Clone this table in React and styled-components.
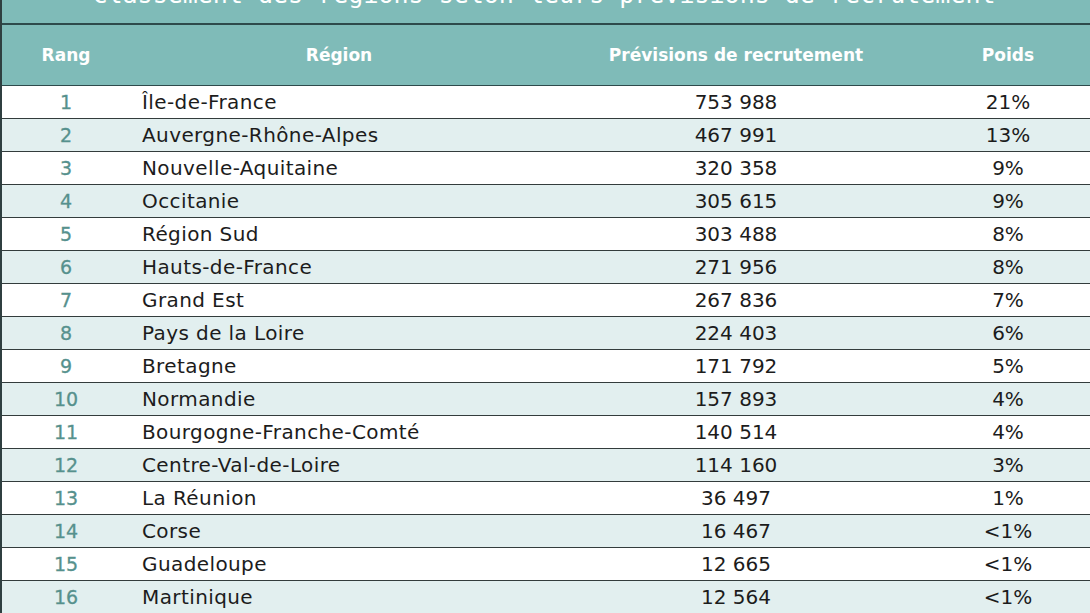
import React from "react"
import styled, { createGlobalStyle } from "styled-components"

const rows = [
  ["1", "Île-de-France", "753 988", "21%"],
  ["2", "Auvergne-Rhône-Alpes", "467 991", "13%"],
  ["3", "Nouvelle-Aquitaine", "320 358", "9%"],
  ["4", "Occitanie", "305 615", "9%"],
  ["5", "Région Sud", "303 488", "8%"],
  ["6", "Hauts-de-France", "271 956", "8%"],
  ["7", "Grand Est", "267 836", "7%"],
  ["8", "Pays de la Loire", "224 403", "6%"],
  ["9", "Bretagne", "171 792", "5%"],
  ["10", "Normandie", "157 893", "4%"],
  ["11", "Bourgogne-Franche-Comté", "140 514", "4%"],
  ["12", "Centre-Val-de-Loire", "114 160", "3%"],
  ["13", "La Réunion", "36 497", "1%"],
  ["14", "Corse", "16 467", "<1%"],
  ["15", "Guadeloupe", "12 665", "<1%"],
  ["16", "Martinique", "12 564", "<1%"],
]

const cols = "128px 418px 376px 168px"

const App = () => {
  return (
    <>
      <GlobalStyle />
      <StyledPage>
        <TitleBar>
          <span>Classement des régions selon leurs prévisions de recrutement</span>
        </TitleBar>
        <HeaderRow>
          <div>Rang</div>
          <div>Région</div>
          <div>Prévisions de recrutement</div>
          <div>Poids</div>
        </HeaderRow>
        {rows.map((r, i) => (
          <Row key={r[0]} striped={i % 2 === 1 ? 1 : 0}>
            <Rank>{r[0]}</Rank>
            <Name>{r[1]}</Name>
            <Value>{r[2]}</Value>
            <Value>{r[3]}</Value>
          </Row>
        ))}
      </StyledPage>
    </>
  )
}

const GlobalStyle = createGlobalStyle`
  body {
    margin: 0;
    background: #fff;
    overflow: hidden;
  }
`

const StyledPage = styled.div`
  width: 1090px;
  height: 613px;
  overflow: hidden;
  border-left: 2px solid #2f3f40;
  box-sizing: border-box;
  font-family: "DejaVu Sans", sans-serif;
`

const TitleBar = styled.div`
  height: 23px;
  background: #7fbbb8;
  border-bottom: 2px solid #2e4a4b;
  overflow: hidden;
  display: flex;
  justify-content: center;

  span {
    font-family: "DejaVu Sans Mono", monospace;
    font-size: 25px;
    color: #fff;
    line-height: 24px;
    margin-top: -17px;
    margin-left: -4px;
    white-space: nowrap;
  }
`

const HeaderRow = styled.div`
  display: grid;
  grid-template-columns: ${cols};
  height: 60px;
  align-items: center;
  background: #7fbbb8;
  border-bottom: 1px solid #2e4a4b;
  color: #fff;
  font-weight: 700;
  font-size: 17px;
  text-align: center;
`

const Row = styled.div`
  display: grid;
  grid-template-columns: ${cols};
  height: 32px;
  align-items: center;
  background: ${(p) => (p.striped ? "#e2efef" : "#fff")};
  border-bottom: 1px solid #333c3c;
  font-size: 20px;
  color: #1c1c1c;
`

const Rank = styled.div`
  text-align: center;
  color: #56918d;
  font-size: 19px;
  -webkit-text-stroke: 0.3px #56918d;
`

const Name = styled.div`
  padding-left: 12px;
  letter-spacing: 0.4px;
`

const Value = styled.div`
  text-align: center;
`

export default App
